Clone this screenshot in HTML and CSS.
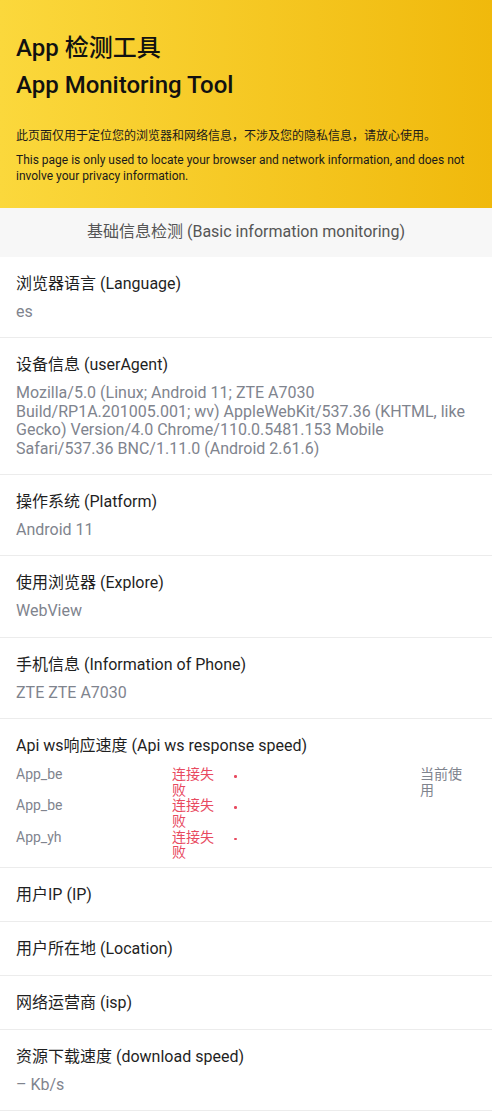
FILE: index.html
```html
<!DOCTYPE html>
<html lang="zh">
<head>
<meta charset="utf-8">
<title>App 检测工具</title>
<link rel="stylesheet" href="styles.css">
</head>
<body>
<header class="hero">
  <h1 class="hero-title">App 检测工具</h1>
  <h1 class="hero-title">App Monitoring Tool</h1>
  <p class="hero-note hero-note-zh">此页面仅用于定位您的浏览器和网络信息，不涉及您的隐私信息，请放心使用。</p>
  <p class="hero-note">This page is only used to locate your browser and network information, and does not involve your privacy information.</p>
</header>
<section class="section">
  <div class="section-head">基础信息检测 (Basic information monitoring)</div>
  <div class="item">
    <div class="item-title">浏览器语言 (Language)</div>
    <div class="item-value">es</div>
  </div>
  <div class="item">
    <div class="item-title">设备信息 (userAgent)</div>
    <div class="item-value">Mozilla/5.0 (Linux; Android 11; ZTE A7030 Build/RP1A.201005.001; wv) AppleWebKit/537.36 (KHTML, like Gecko) Version/4.0 Chrome/110.0.5481.153 Mobile Safari/537.36 BNC/1.11.0 (Android 2.61.6)</div>
  </div>
  <div class="item">
    <div class="item-title">操作系统 (Platform)</div>
    <div class="item-value">Android 11</div>
  </div>
  <div class="item">
    <div class="item-title">使用浏览器 (Explore)</div>
    <div class="item-value">WebView</div>
  </div>
  <div class="item">
    <div class="item-title">手机信息 (Information of Phone)</div>
    <div class="item-value">ZTE ZTE A7030</div>
  </div>
  <div class="item item-api">
    <div class="item-title">Api ws响应速度 (Api ws response speed)</div>
    <div class="api-list">
      <div class="api-row">
        <span class="api-name">App_be</span>
        <span class="api-status">连接失败</span>
        <span class="api-dot-cell"><span class="api-dot"></span></span>
        <span class="api-current">当前使用</span>
      </div>
      <div class="api-row">
        <span class="api-name">App_be</span>
        <span class="api-status">连接失败</span>
        <span class="api-dot-cell"><span class="api-dot"></span></span>
        <span class="api-current"></span>
      </div>
      <div class="api-row">
        <span class="api-name">App_yh</span>
        <span class="api-status">连接失败</span>
        <span class="api-dot-cell"><span class="api-dot"></span></span>
        <span class="api-current"></span>
      </div>
    </div>
  </div>
  <div class="item">
    <div class="item-title">用户IP (IP)</div>
  </div>
  <div class="item">
    <div class="item-title">用户所在地 (Location)</div>
  </div>
  <div class="item">
    <div class="item-title">网络运营商 (isp)</div>
  </div>
  <div class="item">
    <div class="item-title">资源下载速度 (download speed)</div>
    <div class="item-value">– Kb/s</div>
  </div>
</section>
</body>
</html>
```
FILE: styles.css
```css
* { box-sizing: border-box; }
html, body { margin: 0; padding: 0; }
body {
  font-family: Roboto, "Noto Sans CJK SC", sans-serif;
  color: #1f1f1f;
  background: #fff;
}
.hero {
  background: linear-gradient(90deg, #fbd83c 0%, #f0b90c 100%);
  padding: 30px 16px 24px;
}
.hero-title {
  margin: 0;
  font-size: 24px;
  line-height: 37px;
  font-weight: 500;
  color: #111;
}
.hero-note {
  margin: 8px 0 0;
  font-size: 12px;
  line-height: 16px;
  color: #1a1a1a;
}
.hero-note-zh { margin-top: 24px; }
.section-head {
  background: #f7f7f7;
  height: 49px;
  display: flex;
  align-items: center;
  justify-content: center;
  font-size: 16px;
  line-height: 20px;
  color: #555;
  padding-bottom: 1px;
}
.item {
  padding: 16px;
  border-bottom: 1px solid #ececec;
}
.item-title {
  font-size: 16px;
  line-height: 21px;
  color: #1f1f1f;
}
.item-value {
  margin-top: 9px;
  font-size: 16px;
  line-height: 1.15;
  color: #7f848e;
}
.item-api { padding-bottom: 6px; }
.api-list {
  margin-top: 11px;
}
.api-row {
  display: grid;
  grid-template-columns: 156px 46px 1fr 56px;
  font-size: 14px;
  line-height: 15.6px;
}
.api-name { color: #7f848e; }
.api-status { color: #e84a5f; }
.api-dot-cell { padding: 8px 0 0 16px; }
.api-dot {
  display: block;
  width: 2.5px;
  height: 2.5px;
  border-radius: 50%;
  background: #e84a5f;
}
.api-current { color: #7f848e; padding-right: 8px; }
```
